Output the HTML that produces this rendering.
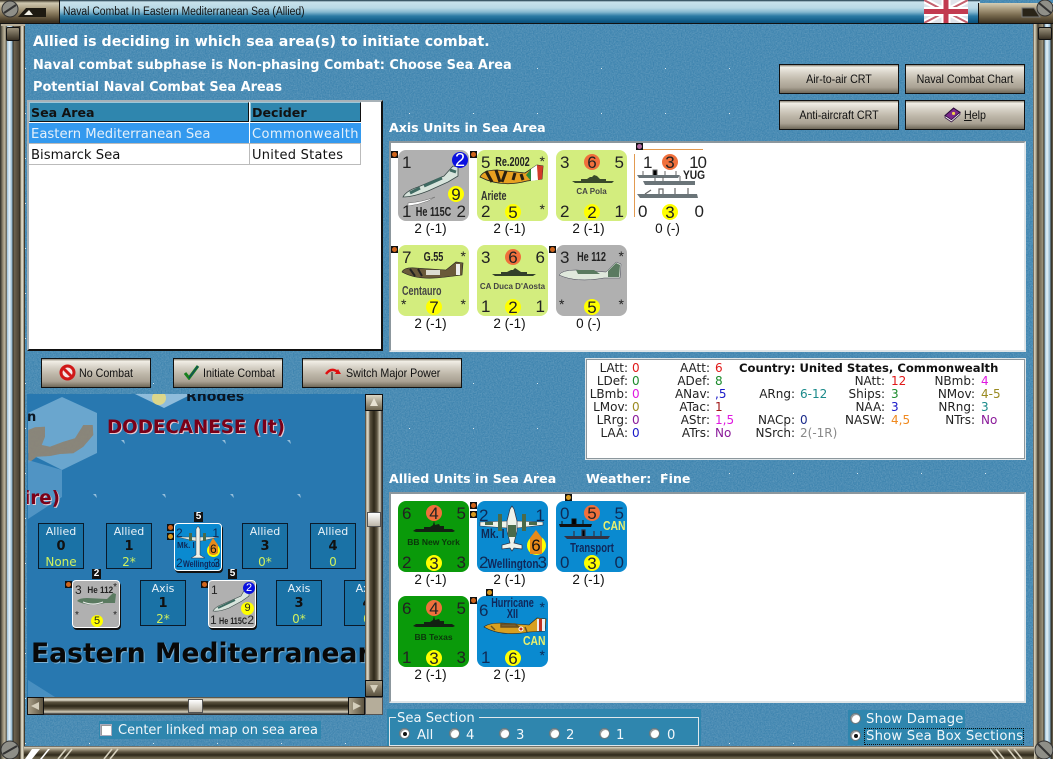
<!DOCTYPE html>
<html><head><meta charset="utf-8"><title>Naval Combat</title>
<style>
html,body{margin:0;padding:0;width:1053px;height:759px;overflow:hidden;background:#4b8db6}
*{box-sizing:border-box}
.a,.t,.b,.c,.p,.n,.box,.r{position:absolute}
.t{white-space:nowrap;line-height:1}
.d{font-family:"DejaVu Sans",sans-serif}
.h{font-family:"DejaVu Sans",sans-serif;font-weight:bold;color:#fff}
.b{font:12px "Liberation Sans",sans-serif;color:#111;background:linear-gradient(#8d8677 0,#f1eee6 8%,#d6d1c6 30%,#bdb6a8 55%,#a9a193 80%,#6f6859 100%);border:1px solid #111;white-space:nowrap}
.b span{position:absolute;top:7px;line-height:14px;transform:scaleX(.89);transform-origin:left}
.b svg{position:absolute}
.b .mid{left:0;right:0;text-align:center;transform-origin:center}
.p{background:#fff;border:2px solid;border-color:#8c979d #dfe5e8 #dfe5e8 #8c979d}
.c{width:71px;height:71px;border-radius:8px;font-family:"Liberation Sans",sans-serif;color:#222;overflow:hidden}
.c svg{position:absolute;left:0;top:0}
.n{font-size:17px;line-height:17px;white-space:nowrap}
.tl{left:4px;top:4px}.tr{right:3px;top:4px}.bl{left:4px;bottom:1px}.br{right:3px;bottom:1px}
.o,.y{position:absolute;left:28px;width:16px;height:16px;border-radius:50%;font-size:17px;line-height:17px;text-align:center}
.o{top:4px;background:#f0703c}.y{top:54px;background:#ff0}
.s{font-weight:bold;position:absolute;left:0;right:0;text-align:center;white-space:nowrap;line-height:1}
.nm{font-size:13px;transform:scaleX(.7)}
.lab{position:absolute;width:71px;text-align:center;font:13.5px "Liberation Sans",sans-serif;color:#111;line-height:14px;margin-left:-3px}
.m{position:absolute;width:7px;height:7px;background:#111}
.m:after{content:"";position:absolute;left:1px;top:1px;width:5px;height:5px;border-radius:50%;background:#d0651c}
.m.g:after{background:#d89a20}
.box{width:46px;height:46px;border:1px solid #0a1a2a;background:#1a72a6;color:#e8f2f8;text-align:center;font:11px/14px "DejaVu Sans",sans-serif;padding-top:1px}
.box b{display:block;color:#111;font-size:13px;line-height:16px}
.box i{display:block;font-style:normal;color:#cff05e;font-size:12px;line-height:14px}
.sm{position:absolute;width:48px;height:48px;border:1px solid #fff;border-radius:4px;overflow:hidden;font-family:"Liberation Sans",sans-serif;color:#222;box-shadow:1px 2px 0 #111}
.tag{position:absolute;width:9px;height:10px;background:#111;color:#fff;font:bold 10px/10px "Liberation Sans",sans-serif;text-align:center}
.i{font-family:"DejaVu Sans",sans-serif;font-size:12px;position:absolute;white-space:nowrap;line-height:13px;color:#222}
.l{text-align:right;width:70px}
.rad{position:absolute;width:11px;height:11px;border-radius:50%;background:#fff;border:1px solid #6a7a80;box-shadow:inset 1px 1px 0 #999}
.rad.on:after{content:"";position:absolute;left:3px;top:3px;width:4px;height:4px;background:#111;border-radius:50%}
.wt{position:absolute;color:#f2f7fa;font:13.2px/14px "DejaVu Sans",sans-serif;white-space:nowrap}
</style></head><body>

<svg class="a" style="left:0;top:0" width="1053" height="759">
<defs>
<filter id="nz" x="0" y="0" width="100%" height="100%"><feTurbulence type="fractalNoise" baseFrequency=".75" numOctaves="2" seed="4"/><feColorMatrix values="0 0 0 0 .95  0 0 0 0 .98  0 0 0 0 1  .9 0 0 0 -.25"/></filter>
<pattern id="dots" width="64" height="45" patternUnits="userSpaceOnUse" x="25" y="23"><rect x="0" y="0" width="1" height="1" fill="#fff" opacity=".8"/></pattern>
</defs>
<rect width="1053" height="759" fill="#3e84af"/>
<rect width="1053" height="759" filter="url(#nz)" opacity=".35"/>
<rect x="24" y="22" width="1010" height="725" fill="url(#dots)"/>
</svg>

<!-- left frame -->
<div class="a" style="left:0;top:23px;width:25px;height:736px;background:linear-gradient(90deg,#2a2a24 0,#9a917a 3px,#bdb59e 5px,#4a4334 6.5px,#9cc0d8 7px,#e6f2f8 9.5px,#8fb4cc 12px,#2a2a22 13px,#6e6450 14px,#4a4234 19px,#2a251a 20px,#c9c1aa 21px,#e0dbc9 23px,#6f664f 24px,#111 25px)"></div>
<div class="a" style="left:6px;top:27px;width:14px;height:14px;background:linear-gradient(#9a917b,#3a3225);border:1px solid #111;border-radius:2px"></div>
<div class="a" style="left:1px;top:23px;width:24px;height:3px;background:#b9b09a"></div>
<!-- right frame -->
<div class="a" style="left:1033px;top:23px;width:20px;height:736px;background:linear-gradient(90deg,#111 0,#d9d3c0 1px,#b0a890 3px,#3a3428 5px,#6e6450 6px,#9a917a 10px,#2a251a 11px,#9cc0d8 12px,#e6f2f8 14px,#8fb4cc 17px,#2a2a22 18px,#6e6450 20px)"></div>
<div class="a" style="left:1038px;top:27px;width:14px;height:13px;background:linear-gradient(#9a917b,#3a3225);border:1px solid #111;border-radius:2px"></div>
<!-- bottom frame -->
<div class="a" style="left:24px;top:746px;width:1010px;height:13px;background:linear-gradient(#111 0,#d9d3c0 1px,#a89f88 3px,#5d5441 6px,#2e2819 9px,#6f664f 12px)"></div>
<svg class="a" style="left:24px;top:746px" width="100" height="13"><path d="M1 13 L8 3 H16 L8 13Z M16 13 L24 3 H26 L18 13Z" fill="#fff"/><path d="M34 13 L42 3 M40 13 L48 3 M80 13 L88 3 M86 13 L94 3" stroke="#d9d3c0" stroke-width="1.6"/></svg>
<svg class="a" style="left:990px;top:746px" width="44" height="13"><path d="M0 3 L8 13 M6 3 L14 13 M18 3 L26 13 M24 3 L32 13" stroke="#d9d3c0" stroke-width="1.6"/></svg>
<svg class="a" style="left:0;top:740px" width="24" height="19"><circle cx="10" cy="10" r="9" fill="#8f8f88" stroke="#333"/><path d="M3 14 L17 6" stroke="#333" stroke-width="2"/></svg>
<svg class="a" style="left:1033px;top:740px" width="20" height="19"><circle cx="11" cy="10" r="9" fill="#8f8f88" stroke="#333"/><path d="M5 4 L17 16" stroke="#333" stroke-width="2"/></svg>

<!-- title bar -->
<div class="a" style="left:60px;top:0;width:920px;height:24px;background:linear-gradient(#0e2b3a 0,#c8e2ec 2px,#b9d9e6 8px,#86b9d0 12px,#2c7ba4 16px,#0f5b88 21px,#0c4f78 23px);border-bottom:1px solid #111"></div>
<div class="a" style="left:0;top:0;width:60px;height:24px;background:linear-gradient(#2a2418 0,#cfc8b0 3px,#a99c7f 9px,#7a6c50 15px,#3c3120 22px);border-bottom:1px solid #111;border-right:1px solid #111"></div>
<svg class="a" style="left:0;top:0" width="60" height="24"><circle cx="10" cy="9" r="8" fill="#8f8f88" stroke="#333"/><path d="M4 13 L16 5" stroke="#333" stroke-width="2"/><path d="M18 17 L26 8 H46 L46 17Z" fill="#1e1a12"/><path d="M24 15 L29 10 L33 15Z" fill="#f2f0e6"/></svg>
<div class="a" style="left:978px;top:3px;width:75px;height:21px;background:linear-gradient(#d5ceb6 0,#a99c7f 6px,#7a6c50 12px,#3c3120 20px);border-bottom:1px solid #111;border-left:1px solid #111"></div>
<svg class="a" style="left:1020px;top:0" width="33" height="24"><path d="M2 8 H14 L20 17 H2Z" fill="#2a2418" stroke="#777"/><circle cx="25" cy="8" r="8" fill="#8f8f88" stroke="#333"/><path d="M19 3 L31 13" stroke="#333" stroke-width="2"/></svg>
<div class="t" style="left:63px;top:6px;font:11.5px 'Liberation Sans',sans-serif;color:#111;transform:scaleX(.9);transform-origin:left">Naval Combat In Eastern Mediterranean Sea (Allied)</div>
<svg class="a" style="left:924px;top:0" width="44" height="23" viewBox="0 0 44 23"><rect width="44" height="23" fill="#dfe3ea"/><path d="M0 0 L44 23 M44 0 L0 23" stroke="#fff" stroke-width="6"/><path d="M0 0 L44 23 M44 0 L0 23" stroke="#c4606e" stroke-width="2"/><path d="M22 0 V23 M0 11.500 H44" stroke="#fff" stroke-width="9"/><path d="M22 0 V23 M0 11.500 H44" stroke="#c23a50" stroke-width="5"/></svg>

<!-- headings -->
<div class="t h" style="left:33px;top:35px;font-size:14.2px">Allied is deciding in which sea area(s) to initiate combat.</div>
<div class="t h" style="left:33px;top:60px;font-size:12.9px">Naval combat subphase is Non-phasing Combat: Choose Sea Area</div>
<div class="t h" style="left:33px;top:82px;font-size:12.9px">Potential Naval Combat Sea Areas</div>
<div class="t h" style="left:389px;top:122px;font-size:12.600px">Axis Units in Sea Area</div>
<div class="t h" style="left:389px;top:473px;font-size:12.600px">Allied Units in Sea Area</div>
<div class="t h" style="left:586px;top:473px;font-size:12.600px">Weather:&nbsp; Fine</div>

<!-- table -->
<div class="a" style="left:27px;top:100px;width:356px;height:251px;background:#fff;border:2px solid;border-color:#a8b2b8 #111 #111 #a8b2b8"></div>
<div class="a" style="left:29px;top:102px;width:220px;height:20px;background:#2f86ae;border:1px solid;border-color:#9cc7d9 #111 #111 #9cc7d9"></div>
<div class="a" style="left:250px;top:102px;width:111px;height:20px;background:#2f86ae;border:1px solid;border-color:#9cc7d9 #111 #111 #9cc7d9"></div>
<div class="t h" style="left:31px;top:107px;font-size:12.6px;color:#111">Sea Area</div>
<div class="t h" style="left:252px;top:107px;font-size:12.6px;color:#111">Decider</div>
<div class="a" style="left:29px;top:123px;width:220px;height:20px;background:#3399ee"></div>
<div class="a" style="left:250px;top:123px;width:111px;height:20px;background:#3399ee"></div>
<div class="a" style="left:29px;top:143px;width:332px;height:1px;background:#bbb"></div>
<div class="a" style="left:29px;top:164px;width:332px;height:1px;background:#bbb"></div>
<div class="a" style="left:249px;top:144px;width:1px;height:20px;background:#bbb"></div>
<div class="a" style="left:360px;top:144px;width:1px;height:20px;background:#bbb"></div>
<div class="t d" style="left:31px;top:128px;font-size:13.2px;color:#e4f0fa">Eastern Mediterranean Sea</div>
<div class="t d" style="left:252px;top:128px;font-size:13px;letter-spacing:.4px;color:#e4f0fa">Commonwealth</div>
<div class="t d" style="left:31px;top:149px;font-size:13.2px;color:#111">Bismarck Sea</div>
<div class="t d" style="left:252px;top:149px;font-size:13px;letter-spacing:.25px;color:#111">United States</div>

<!-- top buttons -->
<div class="b" style="left:779px;top:64px;width:120px;height:30px"><span class="mid">Air-to-air CRT</span></div>
<div class="b" style="left:905px;top:64px;width:120px;height:30px"><span class="mid">Naval Combat Chart</span></div>
<div class="b" style="left:779px;top:100px;width:120px;height:30px"><span class="mid">Anti-aircraft CRT</span></div>
<div class="b" style="left:905px;top:100px;width:120px;height:30px"><svg style="left:38px;top:6px" width="17" height="16" viewBox="0 0 16 15"><path d="M1 8 L9 1 L15 5 L7 13Z" fill="#7a2a8a" stroke="#2a0a3a"/><path d="M1 8 L1 10 L7 14 L15 7 L15 5 L7 12Z" fill="#f2eef2" stroke="#2a0a3a" stroke-width=".7"/><circle cx="9" cy="6" r="1.500" fill="#f3d34a"/></svg><span style="left:58px"><u>H</u>elp</span></div>

<!-- axis panel -->
<div class="p" style="left:389px;top:141px;width:637px;height:211px"></div>

<!-- He 115C -->
<div class="c" style="left:398px;top:150px;background:#b0b0b0">
<svg width="71" height="71"><path d="M5 47 Q8 41 20 37 L46 26 L55 16 L60 17 L60 26 L50 32 L30 41 Q15 47 5 47Z" fill="#d8e4dc" stroke="#3a4a48" stroke-width=".8"/><path d="M12 43 L22 38 M26 36 L44 28 M52 20 L58 22" stroke="#3f6a62" stroke-width="3"/><path d="M10 53 Q24 52 37 47 L30 51 Q20 55 10 56Z" fill="#fff" stroke="#666" stroke-width=".5"/></svg>
<span class="n tl">1</span><div style="position:absolute;left:54px;top:2px;width:16px;height:16px;border-radius:50%;background:#0a10e0;color:#fff;text-align:center;font-size:18px;line-height:17px">2</div>
<div style="position:absolute;left:50px;top:36px;width:16px;height:16px;border-radius:50%;background:#ff0;color:#222;text-align:center;font-size:17px;line-height:17px">9</div>
<span class="n bl">1</span><span class="n br">2</span><div class="s nm" style="bottom:3px">He 115C</div></div>
<div class="lab" style="left:398px;top:222px">2 (-1)</div>
<div class="m" style="left:391px;top:151px"></div>

<!-- Re.2002 -->
<div class="c" style="left:477px;top:150px;background:#d3ed7e">
<svg width="71" height="71"><path d="M3 27 Q6 20 20 20 L48 23 L60 15 L66 16 L65 29 L50 31 Q24 38 3 27Z" fill="#e8a020" stroke="#222" stroke-width=".8"/><path d="M9 21 l6 11 M19 20 l4 12 M29 21 l-4 11 M38 23 l-2 7 M44 24 l2 6" stroke="#2a2010" stroke-width="3"/><path d="M54 19 L60 15 L61 30 L54 31Z" fill="#fff"/><path d="M60 15 L66 16 L65 29 L61 30Z" fill="#d23a2a"/><path d="M49 25 L54 19 L54 31Z" fill="#2d8a3a"/></svg>
<span class="n tl">5</span><span class="n" style="right:3px;top:3px;font-size:14px">*</span>
<div class="s nm" style="top:5px">Re.2002</div>
<div class="t" style="left:4px;top:40px;font-size:12.500px;font-weight:bold;transform:scaleX(.72);transform-origin:left;color:#333">Ariete</div>
<span class="n bl">2</span><div class="y">5</div><span class="n" style="right:3px;bottom:3px;font-size:14px">*</span></div>
<div class="lab" style="left:477px;top:222px">2 (-1)</div>
<div class="m" style="left:470px;top:151px"></div>

<!-- CA Pola -->
<div class="c" style="left:556px;top:150px;background:#d3ed7e">
<svg width="71" height="71"><path d="M16 31 H58 L56 33 H19Z" fill="#3a4a2a"/><path d="M25 31 V29 H31 L34 27 H36 L38 25 L41 26 L44 29 H50 V31Z" fill="#3a4a2a"/></svg>
<span class="n tl">3</span><div class="o">6</div><span class="n tr">5</span>
<div class="s" style="top:38px;font-size:8px;color:#444">CA Pola</div>
<span class="n bl">2</span><div class="y">2</div><span class="n br">1</span></div>
<div class="lab" style="left:556px;top:222px">2 (-1)</div>

<!-- YUG -->
<div class="c" style="left:635px;top:150px;background:#fff;overflow:visible;border-radius:0">
<div class="a" style="left:-1px;top:4px;width:1px;height:63px;background:#e29a50"></div>
<div class="a" style="left:8px;top:-1px;width:60px;height:1px;background:#e29a50"></div>
<svg width="71" height="71"><path d="M2 25 H45 L43 28 H4Z" fill="#6a7478"/><path d="M8 25 V21 M18 25 V20 H22 V25 M30 25 V21 M41 25 V21" stroke="#666" stroke-width="1"/><path d="M8 31 H60 V35 H10Z" fill="#6a7478"/><path d="M20 31 V28 M28 31 V27 M45 31 V26" stroke="#666" stroke-width="1"/><path d="M2 44 H62 L63 48 H5Z" fill="#6a7478"/><path d="M10 44 L16 40 M24 44 V39 H28 V44 M40 44 V38 M53 44 V38" stroke="#666" stroke-width="1.200" fill="none"/></svg>
<span class="n" style="left:8px;top:4px">1</span><div class="o" style="left:27px">3</div><span class="n" style="right:0;top:4px;letter-spacing:-1px">10</span>
<div class="t" style="left:48px;top:19px;font-size:12px;font-weight:bold;color:#222;transform:scaleX(.85);transform-origin:left">YUG</div>
<span class="n" style="left:3px;bottom:1px">0</span><div class="y" style="left:27px">3</div><span class="n" style="right:2px;bottom:1px">0</span></div>
<div class="lab" style="left:635px;top:222px">0 (-)</div>
<div class="a" style="left:636px;top:143px;width:7px;height:7px;background:#111"></div>
<div class="a" style="left:637px;top:144px;width:5px;height:5px;background:#b06aa0;border-radius:50%"></div>

<!-- G.55 -->
<div class="c" style="left:398px;top:245px;background:#d3ed7e">
<svg width="71" height="71"><path d="M4 27 Q6 22 18 23 L48 25 L58 17 L65 18 L64 30 L48 32 Q20 36 4 27Z" fill="#6a5a3a" stroke="#222" stroke-width=".6"/><path d="M28 25 h14 v5 h-14Z" fill="#dcdcd0"/><path d="M58 19 H62 V30 H58Z" fill="#eee"/><path d="M12 24 l5 7 M20 24 l4 7" stroke="#222" stroke-width="2"/></svg>
<span class="n tl">7</span><span class="n" style="right:3px;top:3px;font-size:14px">*</span>
<div class="s nm" style="top:5px">G.55</div>
<div class="t" style="left:4px;top:40px;font-size:12.500px;font-weight:bold;transform:scaleX(.72);transform-origin:left;color:#444">Centauro</div>
<span class="n" style="left:3px;bottom:3px;font-size:14px">*</span><div class="y">7</div><span class="n" style="right:3px;bottom:3px;font-size:14px">*</span></div>
<div class="lab" style="left:398px;top:317px">2 (-1)</div>
<div class="m" style="left:391px;top:246px"></div>

<!-- CA Duca -->
<div class="c" style="left:477px;top:245px;background:#d3ed7e">
<svg width="71" height="71"><path d="M15 29 H59 L56 31 H18Z" fill="#33402a"/><path d="M24 29 V27 H30 L34 25 H36 L38 23 L41 25 L44 27 H50 V29Z" fill="#33402a"/></svg>
<span class="n tl">3</span><div class="o">6</div><span class="n tr">6</span>
<div class="s" style="top:38px;font-size:8px;color:#444">CA Duca D'Aosta</div>
<span class="n bl">1</span><div class="y">2</div><span class="n br">1</span></div>
<div class="lab" style="left:477px;top:317px">2 (-1)</div>

<!-- He 112 -->
<div class="c" style="left:556px;top:245px;background:#b0b0b0">
<svg width="71" height="71"><path d="M3 30 Q6 25 20 25 L50 27 L60 17 L65 19 L64 33 L48 33 Q20 38 3 30Z" fill="#dfe8dc" stroke="#445" stroke-width=".5"/><path d="M20 25 h18 l6 4 h-22Z M52 26 L60 18 L64 20 L63 32 L52 32Z" fill="#5a7a60"/></svg>
<span class="n tl">3</span><span class="n" style="right:3px;top:3px;font-size:14px">*</span>
<div class="s nm" style="top:5px">He 112</div>
<span class="n" style="left:3px;bottom:3px;font-size:14px">*</span><div class="y">5</div><span class="n" style="right:3px;bottom:3px;font-size:14px">*</span></div>
<div class="lab" style="left:556px;top:317px">0 (-)</div>
<div class="m" style="left:549px;top:246px"></div>

<!-- bottom buttons -->
<div class="b" style="left:41px;top:358px;width:110px;height:30px"><svg style="left:17px;top:5px" width="17" height="17" viewBox="0 0 17 17"><circle cx="8.500" cy="8.500" r="6.500" fill="#f4e6e6" stroke="#d01818" stroke-width="3"/><path d="M4 4 L13 13" stroke="#d01818" stroke-width="3"/></svg><span style="left:37px">No Combat</span></div>
<div class="b" style="left:173px;top:358px;width:110px;height:30px"><svg style="left:10px;top:6px" width="16" height="15" viewBox="0 0 16 15"><path d="M1 8 L5 13 L14 1" fill="none" stroke="#18801e" stroke-width="3"/><path d="M5 13 L14 1" stroke="#103a70" stroke-width="1" fill="none"/></svg><span style="left:29px">Initiate Combat</span></div>
<div class="b" style="left:302px;top:358px;width:160px;height:30px"><svg style="left:22px;top:7px" width="17" height="15" viewBox="0 0 17 15"><path d="M1 8 Q6 1 13 6" fill="none" stroke="#e01010" stroke-width="2.500"/><path d="M16 8 L10 8 L13 3Z" fill="#e01010"/><path d="M7 6 V14" stroke="#222" stroke-width="1"/></svg><span style="left:43px">Switch Major Power</span></div>

<!-- info panel -->
<div class="a" style="left:585px;top:358px;width:441px;height:102px;background:#fff;border:1px solid #e0e6e8;box-shadow:inset 0 0 0 1px #8c979d"></div>
<div class="i l" style="left:558px;top:362px">LAtt:</div><div class="i" style="left:632px;top:362px;color:#e01818">0</div>
<div class="i l" style="left:558px;top:375px">LDef:</div><div class="i" style="left:632px;top:375px;color:#1a8a2a">0</div>
<div class="i l" style="left:558px;top:388px">LBmb:</div><div class="i" style="left:632px;top:388px;color:#e018e0">0</div>
<div class="i l" style="left:558px;top:401px">LMov:</div><div class="i" style="left:632px;top:401px;color:#9a8a20">0</div>
<div class="i l" style="left:558px;top:414px">LRrg:</div><div class="i" style="left:632px;top:414px;color:#8a1a9a">0</div>
<div class="i l" style="left:558px;top:427px">LAA:</div><div class="i" style="left:632px;top:427px;color:#1818c8">0</div>

<div class="i l" style="left:640px;top:362px">AAtt:</div><div class="i" style="left:715px;top:362px;color:#e01818">6</div>
<div class="i l" style="left:640px;top:375px">ADef:</div><div class="i" style="left:715px;top:375px;color:#1a8a2a">8</div>
<div class="i l" style="left:640px;top:388px">ANav:</div><div class="i" style="left:715px;top:388px;color:#1818c8">,5</div>
<div class="i l" style="left:640px;top:401px">ATac:</div><div class="i" style="left:715px;top:401px;color:#a01818">1</div>
<div class="i l" style="left:640px;top:414px">AStr:</div><div class="i" style="left:715px;top:414px;color:#e018e0">1,5</div>
<div class="i l" style="left:640px;top:427px">ATrs:</div><div class="i" style="left:715px;top:427px;color:#8a1a9a">No</div>

<div class="i" style="left:739px;top:362px;color:#111;font-weight:bold;font-size:11.6px">Country: United States, Commonwealth</div>

<div class="i l" style="left:725px;top:388px">ARng:</div><div class="i" style="left:800px;top:388px;color:#1a8a8a">6-12</div>
<div class="i l" style="left:725px;top:414px">NACp:</div><div class="i" style="left:800px;top:414px;color:#1a2a8a">0</div>
<div class="i l" style="left:725px;top:427px">NSrch:</div><div class="i" style="left:800px;top:427px;color:#888">2(-1R)</div>

<div class="i l" style="left:815px;top:375px">NAtt:</div><div class="i" style="left:891px;top:375px;color:#e01818">12</div>
<div class="i l" style="left:815px;top:388px">Ships:</div><div class="i" style="left:891px;top:388px;color:#1a8a2a">3</div>
<div class="i l" style="left:815px;top:401px">NAA:</div><div class="i" style="left:891px;top:401px;color:#1818c8">3</div>
<div class="i l" style="left:815px;top:414px">NASW:</div><div class="i" style="left:891px;top:414px;color:#f08a20">4,5</div>

<div class="i l" style="left:905px;top:375px">NBmb:</div><div class="i" style="left:981px;top:375px;color:#e018e0">4</div>
<div class="i l" style="left:905px;top:388px">NMov:</div><div class="i" style="left:981px;top:388px;color:#9a8a20">4-5</div>
<div class="i l" style="left:905px;top:401px">NRng:</div><div class="i" style="left:981px;top:401px;color:#1a8a8a">3</div>
<div class="i l" style="left:905px;top:414px">NTrs:</div><div class="i" style="left:981px;top:414px;color:#8a1a9a">No</div>

<!-- allied panel -->
<div class="p" style="left:389px;top:492px;width:637px;height:211px"></div>

<!-- BB New York -->
<div class="c" style="left:398px;top:501px;background:#0a9a0a">
<svg width="71" height="71"><path d="M15 30 L18 28 H54 L57 30 L55 31 H18Z" fill="#122212"/><path d="M26 28 V26 H32 L35 24 L36 20 L37 24 L41 23 L42 25 H46 V28Z" fill="#122212"/></svg>
<span class="n tl">6</span><div class="o">4</div><span class="n tr">5</span>
<div class="s" style="top:37px;font-size:8.5px;color:#0b360b">BB New York</div>
<span class="n bl">2</span><div class="y">3</div><span class="n br">3</span></div>
<div class="lab" style="left:398px;top:573px">2 (-1)</div>

<!-- Wellington -->
<div class="c" style="left:477px;top:501px;background:#0a8ad0">
<svg width="71" height="71"><path d="M3 21 L30 20 H40 L66 21 L66 24 L40 27 H30 L3 25Z" fill="#eef2ea" stroke="#334" stroke-width=".6"/><path d="M33 8 L35 5 L37 8 L40 20 V30 L37 42 L45 44 V48 L37 47 L35 50 L33 47 L25 48 V44 L33 42 L30 30 V20Z" fill="#eef2ea" stroke="#334" stroke-width=".7"/><path d="M21 13 h4 v17 h-4Z M45 13 h4 v17 h-4Z M8 21 h8 v3 h-8Z M52 21 h8 v3 h-8Z M31 24 h8 v12 h-8Z" fill="#4a6a4a"/></svg>
<span class="n" style="left:2px;top:6px;color:#0f2a55">2</span><span class="n" style="right:3px;top:6px;color:#0f2a55">1</span>
<div class="t" style="left:4px;top:27px;font-size:12.500px;font-weight:bold;color:#0f2a55;transform:scaleX(.85);transform-origin:left">Mk. I</div>
<svg width="71" height="71"><ellipse cx="59.500" cy="44.500" rx="9.500" ry="9.500" fill="#ff0"/><path d="M59 29 L65 37 V53 H53 V37Z" fill="#e88a1a"/></svg>
<div class="t" style="left:49px;width:20px;top:36px;font-size:17px;color:#111;text-align:center">6</div>
<span class="n" style="left:2px;bottom:1px;color:#0f2a55">2</span>
<div class="s" style="left:0;right:-1px;bottom:2px;font-size:13px;transform:scaleX(.77);color:#10275a">Wellington</div>
<span class="n" style="right:1px;bottom:1px;color:#0f2a55">3</span></div>
<div class="lab" style="left:477px;top:573px">2 (-1)</div>
<div class="m" style="left:470px;top:502px"></div>
<div class="m g" style="left:470px;top:511px"></div>

<!-- Transport -->
<div class="c" style="left:556px;top:501px;background:#0a8ad0">
<svg width="71" height="71"><path d="M3 23 H36 L35 26 H4Z" fill="#111"/><path d="M6 23 V20 M16 23 V18 H20 V23 M27 23 V19" stroke="#111" stroke-width="1"/><path d="M8 35 H54 L52 38 H11Z" fill="#334"/><path d="M18 35 V30 M26 35 V29 H29 V35 M38 35 V30 M45 35 V30" stroke="#334" stroke-width="1.200"/></svg>
<span class="n tl" style="color:#0f2a55">0</span><div class="o">5</div><span class="n tr" style="color:#0f2a55">5</span>
<div class="t" style="left:47px;top:18px;font-size:13px;font-weight:bold;color:#e8f070;transform:scaleX(.8);transform-origin:left">CAN</div>
<div class="s" style="top:40px;left:1px;font-size:13px;transform:scaleX(.73);color:#10275a">Transport</div>
<span class="n bl" style="color:#0f2a55">0</span><div class="y">3</div><span class="n br" style="color:#0f2a55">0</span></div>
<div class="lab" style="left:556px;top:573px">2 (-1)</div>
<div class="m g" style="left:565px;top:494px"></div>

<!-- BB Texas -->
<div class="c" style="left:398px;top:596px;background:#0a9a0a">
<svg width="71" height="71"><path d="M15 30 L18 28 H54 L57 30 L55 31 H18Z" fill="#122212"/><path d="M26 28 V26 H32 L35 24 L36 20 L37 24 L41 23 L42 25 H46 V28Z" fill="#122212"/></svg>
<span class="n tl">6</span><div class="o">4</div><span class="n tr">5</span>
<div class="s" style="top:37px;font-size:8.5px;color:#0b360b">BB Texas</div>
<span class="n bl">1</span><div class="y">3</div><span class="n br">3</span></div>
<div class="lab" style="left:398px;top:668px">2 (-1)</div>

<!-- Hurricane -->
<div class="c" style="left:477px;top:596px;background:#0a8ad0">
<svg width="71" height="71"><path d="M7 31 Q11 27 25 27 L52 29 L60 22 L69 23 L68 35 L52 36 Q24 41 7 31Z" fill="#d8a020" stroke="#222" stroke-width=".6"/><path d="M24 28 h14 l4 3 h-18Z M14 30 l4 4 M48 31 l2 5" stroke="#6a5020" stroke-width="1.500" fill="#7a6030"/><path d="M60 23 H68 V35 H60Z" fill="#eee"/><path d="M62 23 H65 V35 H62Z" fill="#c03020"/><circle cx="44" cy="33" r="2" fill="#c03020" stroke="#fff"/></svg>
<span class="n" style="left:2px;top:6px;color:#0f2a55">6</span><span class="n" style="right:3px;top:3px;font-size:14px;color:#0f2a55">*</span>
<div class="s" style="top:2px;left:0;font-size:12.500px;transform:scaleX(.73);color:#10275a;line-height:11px">Hurricane<br>XII</div>
<div class="t" style="left:46px;top:38px;font-size:13px;font-weight:bold;color:#e8f070;transform:scaleX(.8);transform-origin:left">CAN</div>
<span class="n bl" style="color:#0f2a55">1</span><div class="y">6</div><span class="n" style="right:3px;bottom:3px;font-size:14px;color:#0f2a55">*</span></div>
<div class="lab" style="left:477px;top:668px">2 (-1)</div>
<div class="m" style="left:470px;top:597px"></div>
<div class="m g" style="left:486px;top:589px"></div>

<!-- map -->
<div class="a" style="left:27px;top:394px;width:338px;height:303px;background:#2a78b0;overflow:hidden">
<svg class="a" style="left:0;top:0" width="338" height="303">
<defs><filter id="rock" x="0" y="0" width="100%" height="100%"><feTurbulence type="fractalNoise" baseFrequency=".45" numOctaves="3" seed="7"/><feColorMatrix values="0 0 0 0 .25 0 0 0 0 .23 0 0 0 0 .2 1.400 0 0 0 -.35"/><feComposite in2="SourceAlpha" operator="in"/><feMerge><feMergeNode in="SourceGraphic"/><feMergeNode/></feMerge></filter></defs>
<path d="M0 0 H338 V303 H0Z" fill="#2878b0"/>
<path d="M35 3 L70 19 V59 L35 76 L1 59 V19Z" fill="#6aa6ce"/>
<path d="M108 0 L137 14 L165 0Z" fill="#8fbcdb"/>
<circle cx="132" cy="4" r="7" fill="#dcd68a"/>
<path d="M1.300 36 L8 33.300 L18 32.700 L18 42.700 L14.700 51 L23 52.700 L36.300 47.700 L48 44.300 L56.300 31 L65.700 31 L66.300 41 L56.300 52.700 L46.300 59.300 L33 60 L23 62 L9.700 62.700 L1.300 69.300Z" fill="#8a877a" filter="url(#rock)"/>
<path d="M1 66 L35 76 V103 L1 125Z" fill="#5d9ecb" opacity=".75"/>
<path d="M1 286 L28 303 H1Z" fill="#5d9ecb" opacity=".6"/>
<g fill="#a9cbe2" opacity=".85"><path d="M94 46 l4 4 l-1 -4Z M195 46 l4 4 l-1 -4Z M260 46 l4 4 l-1 -4Z"/><path d="M66 100 l4 4 l-1 -4Z M135 100 l4 4 l-1 -4Z M203 100 l4 4 l-1 -4Z M270 100 l4 4 l-1 -4Z"/></g>
</svg>
<div class="t h" style="left:159px;top:-4px;font-size:14px;color:#0b1724">Rhodes</div>
<div class="t h" style="left:0;top:17px;font-size:13px;color:#0b1724">n</div>
<div class="t h" style="left:80px;top:25px;font-size:18.3px;color:#7a0018;text-shadow:1px 1px 0 #e8c8d0">DODECANESE (It)</div>
<div class="t h" style="right:305px;top:96px;font-size:18.3px;color:#7a0018;text-shadow:1px 1px 0 #e8c8d0">(Empire)</div>

<div class="box" style="left:11px;top:129px">Allied<b>0</b><i>None</i></div>
<div class="box" style="left:79px;top:129px">Allied<b>1</b><i>2*</i></div>
<div class="box" style="left:215px;top:129px">Allied<b>3</b><i>0*</i></div>
<div class="box" style="left:283px;top:129px">Allied<b>4</b><i>0</i></div>
<div class="box" style="left:113px;top:186px">Axis<b>1</b><i>2*</i></div>
<div class="box" style="left:249px;top:186px">Axis<b>3</b><i>0*</i></div>
<div class="box" style="left:317px;top:186px">Axis<b>4</b><i>0</i></div>

<!-- small Wellington -->
<div class="sm" style="left:147px;top:129px;background:#0a8ad0">
<svg class="a" style="left:0;top:0" width="46" height="46"><path d="M2 13 H44 L26 17 H20Z" fill="#dfe8dc" stroke="#334" stroke-width=".4"/><path d="M21 5 L23 2 L25 5 L25 31 L30 34 H16 L21 31Z" fill="#eef2ea" stroke="#334" stroke-width=".5"/><path d="M14 9 h3 v8 h-3Z M28 9 h3 v8 h-3Z" fill="#4a6a4a"/></svg>
<span class="a" style="left:1px;top:2px;font-size:12px;color:#0f2a55">2</span><span class="a" style="right:2px;top:2px;font-size:12px;color:#0f2a55">1</span>
<span class="a" style="left:2px;top:17px;font-size:8px;font-weight:bold;color:#0f2a55">Mk. I</span>
<div class="a" style="left:32px;top:20px;width:13px;height:13px;border-radius:50%;background:#ff0"></div>
<svg class="a" style="left:33px;top:14px" width="11" height="18"><path d="M5 0 L10 7 V15 Q5 19 1 15 V7Z" fill="#e88a1a"/></svg>
<span class="a" style="left:35px;top:18px;font-size:12px;color:#111">6</span>
<span class="a" style="left:1px;bottom:0;font-size:12px;color:#0f2a55">2</span>
<span class="a" style="left:8px;bottom:1px;font-size:9px;font-weight:bold;color:#10275a;transform:scaleX(.8);transform-origin:left;white-space:nowrap">Wellington</span>
<span class="a" style="right:1px;bottom:0;font-size:12px;color:#0f2a55">3</span></div>
<div class="tag" style="left:167px;top:118px">5</div>
<div class="m" style="left:140px;top:130px"></div>
<div class="m g" style="left:140px;top:139px"></div>

<!-- small He 112 -->
<div class="sm" style="left:45px;top:186px;background:#b0b0b0">
<svg class="a" style="left:0;top:0" width="46" height="46"><path d="M4 20 Q6 17 14 17 L34 18 L40 12 L43 13 L42 22 L32 22 Q14 26 4 20Z" fill="#5a7a60"/><path d="M10 21 Q20 25 30 21" stroke="#eee" fill="none"/></svg>
<span class="a" style="left:2px;top:2px;font-size:12px">3</span><span class="a" style="left:13px;top:4px;font-size:9px;font-weight:bold;transform:scaleX(.9);white-space:nowrap">He 112</span><span class="a" style="right:2px;top:1px;font-size:10px">*</span>
<span class="a" style="left:2px;bottom:6px;font-size:10px">*</span><div class="y" style="left:18px;top:34px;width:12px;height:12px;font-size:11px;line-height:12px">5</div><span class="a" style="right:2px;bottom:6px;font-size:10px">*</span></div>
<div class="tag" style="left:65px;top:175px">2</div>
<div class="m" style="left:38px;top:187px"></div>

<!-- small He 115C -->
<div class="sm" style="left:181px;top:186px;background:#b0b0b0">
<svg class="a" style="left:0;top:0" width="46" height="46"><path d="M4 30 Q6 26 14 23 L32 15 L36 8 L40 8 L40 15 L33 20 L20 27 Q10 31 4 30Z" fill="#d8e4dc" stroke="#3a4a48" stroke-width=".6"/><path d="M9 27 L26 19" stroke="#3a6a60" stroke-width="2"/></svg>
<span class="a" style="left:2px;top:2px;font-size:12px">1</span><div class="a" style="left:34px;top:1px;width:12px;height:12px;border-radius:50%;background:#0a10e0;color:#fff;font-size:11px;line-height:12px;text-align:center">2</div>
<div class="a" style="left:32px;top:21px;width:13px;height:13px;border-radius:50%;background:#ff0;font-size:11px;line-height:13px;text-align:center">9</div>
<span class="a" style="left:1px;bottom:0;font-size:12px">1</span><span class="a" style="left:10px;bottom:1px;font-size:9px;font-weight:bold;transform:scaleX(.8);transform-origin:left;white-space:nowrap">He 115C</span><span class="a" style="right:1px;bottom:0;font-size:12px">2</span></div>
<div class="tag" style="left:201px;top:175px">5</div>
<div class="m" style="left:174px;top:187px"></div>

<div class="t h" style="left:4px;top:247px;font-size:26.6px;color:#080808;text-shadow:1px 1px 0 #7fb3d5">Eastern Mediterranean</div>
</div>

<!-- scrollbars -->
<div class="a" style="left:365px;top:394px;width:18px;height:303px;background:linear-gradient(90deg,#111 0,#a89f88 1px,#e5e0d0 3px,#5d5441 5px,#2e2819 9px,#5d5441 12px,#d5cfbc 15px,#333 17px)"></div>
<div class="a" style="left:365px;top:394px;width:18px;height:17px;background:linear-gradient(#dbd6c4,#6f664f);border:1px solid #111"></div>
<svg class="a" style="left:365px;top:394px" width="18" height="17"><path d="M5 12 L9 4 L13 12Z" fill="#e8e3d3"/></svg>
<div class="a" style="left:365px;top:680px;width:18px;height:17px;background:linear-gradient(#a89f88,#5d5441);border:1px solid #111"></div>
<svg class="a" style="left:365px;top:680px" width="18" height="17"><path d="M5 5 L13 5 L9 13Z" fill="#d5cfbc"/></svg>
<div class="a" style="left:367px;top:512px;width:14px;height:15px;background:linear-gradient(#fff,#bdb6a8);border:1px solid #555"></div>
<div class="a" style="left:27px;top:697px;width:338px;height:18px;background:linear-gradient(#111 0,#a89f88 1px,#e5e0d0 3px,#5d5441 5px,#2e2819 9px,#5d5441 12px,#d5cfbc 15px,#333 17px)"></div>
<div class="a" style="left:27px;top:697px;width:17px;height:18px;background:linear-gradient(90deg,#a89f88,#5d5441);border:1px solid #111"></div>
<svg class="a" style="left:27px;top:697px" width="17" height="18"><path d="M12 5 V13 L4 9Z" fill="#d5cfbc"/></svg>
<div class="a" style="left:348px;top:697px;width:17px;height:18px;background:linear-gradient(90deg,#a89f88,#5d5441);border:1px solid #111"></div>
<svg class="a" style="left:348px;top:697px" width="17" height="18"><path d="M5 5 V13 L13 9Z" fill="#d5cfbc"/></svg>
<div class="a" style="left:188px;top:699px;width:15px;height:14px;background:linear-gradient(#fff,#bdb6a8);border:1px solid #555"></div>
<div class="a" style="left:365px;top:697px;width:18px;height:18px;background:#b5ad9a;border:1px solid #555"></div>

<!-- checkbox -->
<div class="a" style="left:99px;top:721px;width:222px;height:18px;background:#2f86ae"></div>
<div class="a" style="left:100px;top:724px;width:12px;height:12px;background:#fff;border:1px solid #aab;box-shadow:inset 1px 1px 0 #999"></div>
<div class="wt" style="left:118px;top:724px;font-size:13px">Center linked map on sea area</div>

<!-- sea section -->
<div class="a" style="left:387px;top:709px;width:314px;height:37px;background:#2f86ae"></div>
<div class="a" style="left:389px;top:717px;width:310px;height:29px;border:1px solid #e0e8ec"></div>
<div class="a" style="left:396px;top:712px;height:14px;background:#2f86ae;width:83px"></div>
<div class="wt" style="left:397px;top:712px">Sea Section</div>
<div class="rad on" style="left:399px;top:728px"></div><div class="wt" style="left:417px;top:729px">All</div>
<div class="rad" style="left:449px;top:728px"></div><div class="wt" style="left:466px;top:729px">4</div>
<div class="rad" style="left:499px;top:728px"></div><div class="wt" style="left:516px;top:729px">3</div>
<div class="rad" style="left:549px;top:728px"></div><div class="wt" style="left:566px;top:729px">2</div>
<div class="rad" style="left:599px;top:728px"></div><div class="wt" style="left:616px;top:729px">1</div>
<div class="rad" style="left:649px;top:728px"></div><div class="wt" style="left:667px;top:729px">0</div>

<!-- show options -->
<div class="a" style="left:848px;top:710px;width:117px;height:18px;background:#2f86ae"></div>
<div class="a" style="left:848px;top:728px;width:176px;height:17px;background:#2f86ae"></div>
<div class="rad" style="left:850px;top:713px"></div><div class="wt" style="left:866px;top:713px;letter-spacing:.2px">Show Damage</div>
<div class="rad on" style="left:850px;top:730px"></div>
<div class="a" style="left:864px;top:728px;width:160px;height:17px;border:1px dotted #111"></div>
<div class="wt" style="left:866px;top:730px;letter-spacing:.2px">Show Sea Box Sections</div>
</body></html>
